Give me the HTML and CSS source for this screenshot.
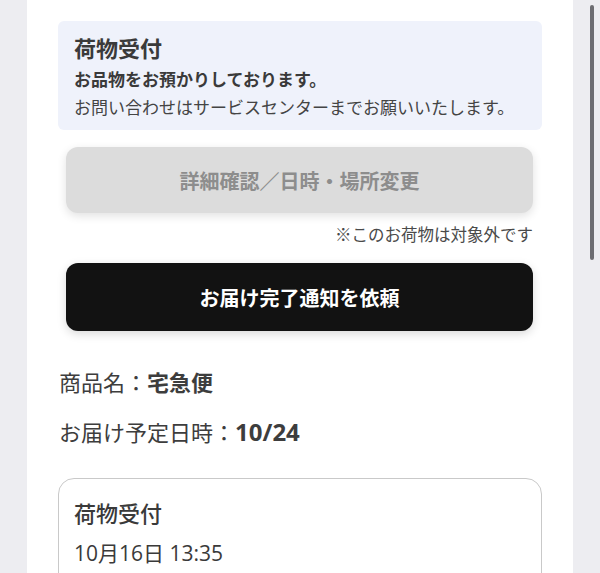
FILE: index.html
```html
<!DOCTYPE html>
<html lang="ja">
<head>
<meta charset="utf-8">
<title>荷物受付</title>
<link rel="stylesheet" href="styles.css">
</head>
<body>
<div class="screen">
  <div class="gutter"></div>
  <main class="panel">
    <section class="notice">
      <h2 class="notice-title">荷物受付</h2>
      <p class="notice-strong">お品物をお預かりしております。</p>
      <p class="notice-text">お問い合わせはサービスセンターまでお願いいたします。</p>
    </section>
    <button class="btn btn-disabled" type="button">詳細確認／日時・場所変更</button>
    <p class="note">※このお荷物は対象外です</p>
    <button class="btn btn-primary" type="button">お届け完了通知を依頼</button>
    <p class="info info-first">商品名：<b>宅急便</b></p>
    <p class="info">お届け予定日時：<b class="num">10/24</b></p>
    <section class="card">
      <h3 class="card-title">荷物受付</h3>
      <p class="card-date">10月16日 13:35</p>
    </section>
  </main>
  <div class="gutter gutter-right"><div class="thumb"></div></div>
</div>
</body>
</html>
```

FILE: styles.css
```css
* { box-sizing: border-box; }
html, body { margin: 0; padding: 0; }
body {
  background: #ededf1;
  font-family: "Open Sans", "Noto Sans CJK JP", sans-serif;
  color: #333;
}
.screen {
  display: grid;
  grid-template-columns: 27px 546px 27px;
  height: 573px;
  overflow: hidden;
}
.gutter { background: #ededf1; }
.gutter-right {
  display: flex;
  justify-content: flex-end;
  align-items: flex-start;
  padding: 5px 6px 0 0;
}
.thumb {
  width: 4px;
  height: 255px;
  border-radius: 2px;
  background: #6d6d72;
}
.panel {
  background: #fff;
  padding: 21px 31px 0;
  display: flex;
  flex-direction: column;
  overflow: hidden;
}
.panel > * { flex-shrink: 0; }
.notice {
  background: #eff2fb;
  border-radius: 6px;
  padding: 12px 16px 8px;
  height: 109px;
}
.notice-title {
  margin: 0;
  font-size: 22px;
  line-height: 30px;
  font-weight: 700;
  color: #3a3a3a;
}
.notice-strong {
  margin: 3px 0 0;
  font-size: 17px;
  line-height: 28px;
  font-weight: 700;
  color: #3a3a3a;
}
.notice-text {
  margin: 0;
  font-size: 17px;
  line-height: 28px;
  color: #444;
}
.btn {
  display: block;
  margin: 0 9px 0 8px;
  border: none;
  border-radius: 12px;
  font-family: inherit;
  font-size: 20px;
  font-weight: 700;
  text-align: center;
}
.btn-disabled {
  margin-top: 17px;
  height: 66px;
  background: #dcdcdc;
  color: #8d8d8d;
  box-shadow: 0 3px 10px rgba(0,0,0,0.12);
}
.note {
  margin: 11px 9px 0 0;
  text-align: right;
  font-size: 16.5px;
  line-height: 22px;
  color: #4a4a4a;
}
.btn-primary {
  margin-top: 17px;
  height: 68px;
  background: #121212;
  color: #fff;
  box-shadow: 0 3px 10px rgba(0,0,0,0.15);
}
.info {
  margin: 0;
  font-size: 22px;
  line-height: 50px;
  color: #3d3d3d;
  padding-left: 1px;
}
.info b { font-weight: 700; }
.info .num { font-size: 24px; }
.info-first { margin-top: 26px; }
.card {
  margin-top: 21px;
  border: 1px solid #c9c9c9;
  border-radius: 16px;
  padding: 18px 15px 0;
  height: 200px;
}
.card-title {
  margin: 0;
  font-size: 22px;
  line-height: 32px;
  font-weight: 500;
  color: #3a3a3a;
}
.card-date {
  margin: 4px 0 0;
  font-size: 21px;
  line-height: 40px;
  color: #3a3a3a;
}
```
